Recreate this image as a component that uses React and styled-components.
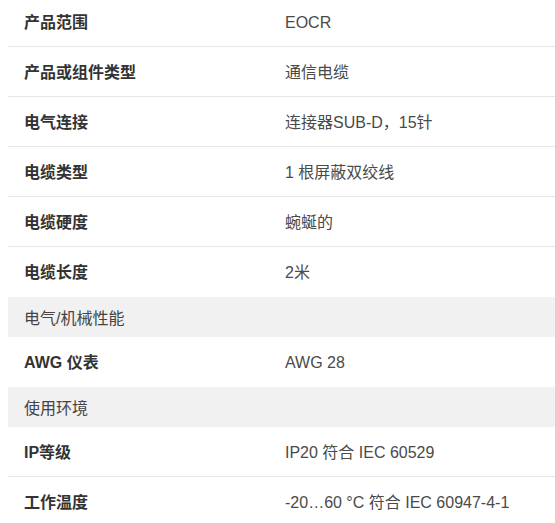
import React from "react";
import styled, { createGlobalStyle } from "styled-components";

const Global = createGlobalStyle`
  html, body { margin: 0; padding: 0; background: #fff; }
  body { padding-left: 8px; overflow: hidden; font-family: "Liberation Sans", Arial, "Noto Sans CJK SC", sans-serif; }
`;

const Table = styled.div`
  margin-top: -3px;
  display: grid;
  grid-template-columns: 261px 1fr;
`;

const Row = styled.div`
  display: contents;
`;

const Cell = styled.div`
  height: 47px;
  padding: 2px 16px 0;
  display: flex;
  align-items: center;
  font-size: 16px;
  line-height: 20px;
  border-bottom: 1px solid ${(p) => (p.$border ? "#e6e6e6" : "transparent")};
  box-sizing: content-box;
  white-space: nowrap;
`;

const Label = styled(Cell)`
  font-weight: bold;
  color: #333;
`;

const Value = styled(Cell)`
  color: #4a4a4a;
`;

const Section = styled.div`
  grid-column: 1 / -1;
  height: 40px;
  display: flex;
  align-items: center;
  padding: 0 16px;
  background: #f1f1f1;
  color: #444;
  font-size: 16px;
`;

const data = [
  { l: "产品范围", v: "EOCR", b: true },
  { l: "产品或组件类型", v: "通信电缆", b: true },
  { l: "电气连接", v: "连接器SUB-D，15针", b: true },
  { l: "电缆类型", v: "1 根屏蔽双绞线", b: true },
  { l: "电缆硬度", v: "蜿蜒的", b: true },
  { l: "电缆长度", v: "2米", b: false },
  { section: "电气/机械性能" },
  { l: "AWG 仪表", v: "AWG 28", b: false },
  { section: "使用环境" },
  { l: "IP等级", v: "IP20 符合 IEC 60529", b: true },
  { l: "工作温度", v: "-20…60 °C 符合 IEC 60947-4-1", b: false },
];

export default function App() {
  return (
    <>
      <Global />
      <Table>
        {data.map((d, i) =>
          d.section ? (
            <Section key={i}>{d.section}</Section>
          ) : (
            <Row key={i}>
              <Label $border={d.b}>{d.l}</Label>
              <Value $border={d.b}>{d.v}</Value>
            </Row>
          )
        )}
      </Table>
    </>
  );
}
